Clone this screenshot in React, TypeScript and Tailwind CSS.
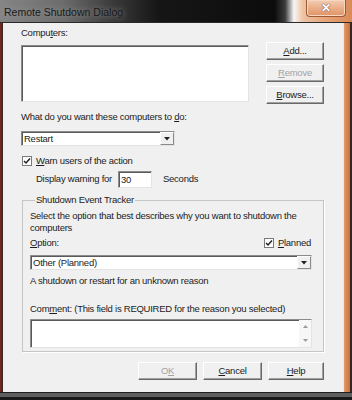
import React from 'react';

const font = "font-['Liberation_Sans',Arial,sans-serif]";

function U({ children }: { children: React.ReactNode }) {
  return <span className="underline underline-offset-[1px]">{children}</span>;
}

function ClassicButton({ children, disabled, className = '' }: { children: React.ReactNode; disabled?: boolean; className?: string }) {
  return (
    <div
      className={`h-[18px] flex items-center justify-center bg-[#f0f0f0] border border-t-white border-l-white border-r-[#696969] border-b-[#696969] shadow-[inset_-1px_-1px_0_#a0a0a0] ${
        disabled ? 'text-[#a3a3a3]' : 'text-[#1c1c1c]'
      } ${className}`}
    >
      {children}
    </div>
  );
}

function Combo({ value, className = '' }: { value: string; className?: string }) {
  return (
    <div className={`h-[15px] flex bg-white border border-t-[#8c8c8c] border-l-[#8c8c8c] border-r-[#e4e4e4] border-b-[#e4e4e4] shadow-[inset_1px_1px_0_#5a5a5a] ${className}`}>
      <div className="flex-1 pl-[2px] leading-[13px]">{value}</div>
      <div className="w-[14px] flex items-center justify-center bg-[#f0f0f0] border border-t-white border-l-white border-r-[#8a8a8a] border-b-[#8a8a8a]">
        <svg width="6" height="4" viewBox="0 0 6 4">
          <path d="M0 0 H6 L3 3.5 Z" fill="#222" />
        </svg>
      </div>
    </div>
  );
}

function Check({ checked }: { checked: boolean }) {
  return (
    <div className="w-[10px] h-[10px] bg-white border border-[#7a7a7a] flex items-center justify-center">
      {checked && (
        <svg width="8" height="8" viewBox="0 0 8 8">
          <path d="M1 4 L3 6 L7 1.5" stroke="#222" strokeWidth="1.5" fill="none" />
        </svg>
      )}
    </div>
  );
}

export default function App() {
  return (
    <div className={`w-[352px] h-[400px] flex flex-col bg-[#161616] overflow-hidden text-[9.5px] tracking-[-0.25px] ${font}`}>
      {/* Title bar */}
      <div className="h-[23px] flex justify-between bg-[linear-gradient(90deg,#858585_0%,#6c6c6c_18%,#3a3a3a_32%,#161616_45%,#0c0c0c_78%,#3c3c3c_81%,#f6f6f6_83.5%,#eec3a4_86%,#e7a57b_92%,#d98a58_100%)] border-b border-[#2a2a2a]">
        <div className="pl-[4px] pt-[5px] text-[10.5px] tracking-[0px] leading-[14px] text-[#1a1a1a] [text-shadow:0_0_6px_#a0a0a0]">
          Remote Shutdown Dialog
        </div>
        <div className="mr-[6px] w-[40px] h-[17px] rounded-b-[4px] border border-t-0 border-[#9a5a36] bg-[linear-gradient(180deg,#f3cdb3_0%,#e9ab85_55%,#e19364_100%)] shadow-[inset_0_0_0_1px_#f6d7c2] flex items-center justify-center">
          <span className="text-[12px] font-bold leading-none text-white [text-shadow:0_0_1px_#6a4a3a,0_0_1px_#6a4a3a]">✕</span>
        </div>
      </div>

      <div className="flex-1 flex">
        {/* left frame */}
        <div className="w-[3px] bg-[linear-gradient(90deg,#7a2a1e_0%,#5a231a_60%,#2a2a2a_100%)]" />

        {/* Client area */}
        <div className="flex-1 flex flex-col bg-[#f0f0f0] pl-[18px] pr-[19px] pt-[3px] text-[#1c1c1c]">
          {/* Computers */}
          <div className="flex">
            <div className="w-[228px] flex flex-col">
              <div className="h-[14px] leading-[14px]">
                Compu<U>t</U>ers:
              </div>
              <div className="mt-[5px] h-[57px] bg-white border border-t-[#8c8c8c] border-l-[#8c8c8c] border-r-[#e4e4e4] border-b-[#e4e4e4] shadow-[inset_1px_1px_0_#5a5a5a]" />
            </div>
            <div className="ml-[17px] mt-[16px] w-[58px] flex flex-col gap-[4px]">
              <ClassicButton>
                <U>A</U>dd...
              </ClassicButton>
              <ClassicButton disabled>
                <U>R</U>emove
              </ClassicButton>
              <ClassicButton>
                <U>B</U>rowse...
              </ClassicButton>
            </div>
          </div>

          {/* Action */}
          <div className="mt-[6px] h-[14px] leading-[14px]">
            What do you want these computers to <U>d</U>o:
          </div>
          <Combo value="Restart" className="mt-[7px] w-[154px]" />

          <div className="mt-[8px] h-[14px] flex items-center">
            <div className="ml-[1px]">
              <Check checked />
            </div>
            <span className="ml-[4px]">
              <U>W</U>arn users of the action
            </span>
          </div>

          <div className="mt-[3px] flex items-center">
            <span className="ml-[15px] w-[82px] whitespace-nowrap">Display warning for</span>
            <div className="w-[34px] h-[17px] bg-white border border-t-[#8c8c8c] border-l-[#8c8c8c] border-r-[#e4e4e4] border-b-[#e4e4e4] shadow-[inset_1px_1px_0_#5a5a5a] pl-[2px] leading-[15px]">
              30
            </div>
            <span className="ml-[11px]">Seconds</span>
          </div>

          {/* Shutdown Event Tracker */}
          <fieldset className="mt-[5px] ml-[1px] border border-[#c5c5c5] shadow-[1px_1px_0_#ffffff] pl-[7px] pr-[11px] pb-[3px]">
            <legend className="ml-[5px] px-[1px] h-[14px] leading-[14px]">Shutdown Event Tracker</legend>
            <div className="mt-[3px] leading-[12px]">
              Select the option that best describes why you want to shutdown the computers
            </div>
            <div className="mt-[2px] h-[14px] flex items-center justify-between">
              <span>
                <U>O</U>ption:
              </span>
              <div className="flex items-center pr-[1px]">
                <Check checked />
                <span className="ml-[4px]">
                  <U>P</U>lanned
                </span>
              </div>
            </div>
            <Combo value="Other (Planned)" className="mt-[5px]" />
            <div className="mt-[4px] h-[14px] leading-[14px]">A shutdown or restart for an unknown reason</div>
            <div className="mt-[14px] h-[14px] leading-[14px] whitespace-nowrap">
              Com<U>m</U>ent: (This field is REQUIRED for the reason you selected)
            </div>
            <div className="mt-[3px] h-[29px] flex bg-white border border-t-[#8c8c8c] border-l-[#8c8c8c] border-r-[#e4e4e4] border-b-[#e4e4e4] shadow-[inset_1px_1px_0_#5a5a5a]">
              <div className="flex-1" />
              <div className="w-[12px] flex flex-col items-center justify-between py-[5px] bg-[#f7f7f7]">
                <svg width="5" height="3" viewBox="0 0 5 3">
                  <path d="M0 3 H5 L2.5 0 Z" fill="#9a9a9a" />
                </svg>
                <svg width="5" height="3" viewBox="0 0 5 3">
                  <path d="M0 0 H5 L2.5 3 Z" fill="#9a9a9a" />
                </svg>
              </div>
            </div>
          </fieldset>

          {/* Buttons */}
          <div className="mt-[10px] flex justify-end gap-[6px]">
            <ClassicButton disabled className="w-[59px]">
              O<U>K</U>
            </ClassicButton>
            <ClassicButton className="w-[59px]">
              <U>C</U>ancel
            </ClassicButton>
            <ClassicButton className="w-[56px]">
              <U>H</U>elp
            </ClassicButton>
          </div>
        </div>

        {/* right frame */}
        <div className="w-[9px] flex">
          <div className="w-[1px] bg-[#e8e8e8]" />
          <div className="w-[6px] bg-[linear-gradient(90deg,#e39a6a_0%,#c8703e_100%)]" />
          <div className="w-[2px] bg-[#3a2620]" />
        </div>
      </div>

      {/* bottom frame */}
      <div className="h-[8px] flex flex-col">
        <div className="h-[1px] bg-[#1e1e1e]" />
        <div className="h-[4px] bg-[#5e5e5e]" />
        <div className="flex-1 bg-[#1a1a1a]" />
      </div>
    </div>
  );
}
